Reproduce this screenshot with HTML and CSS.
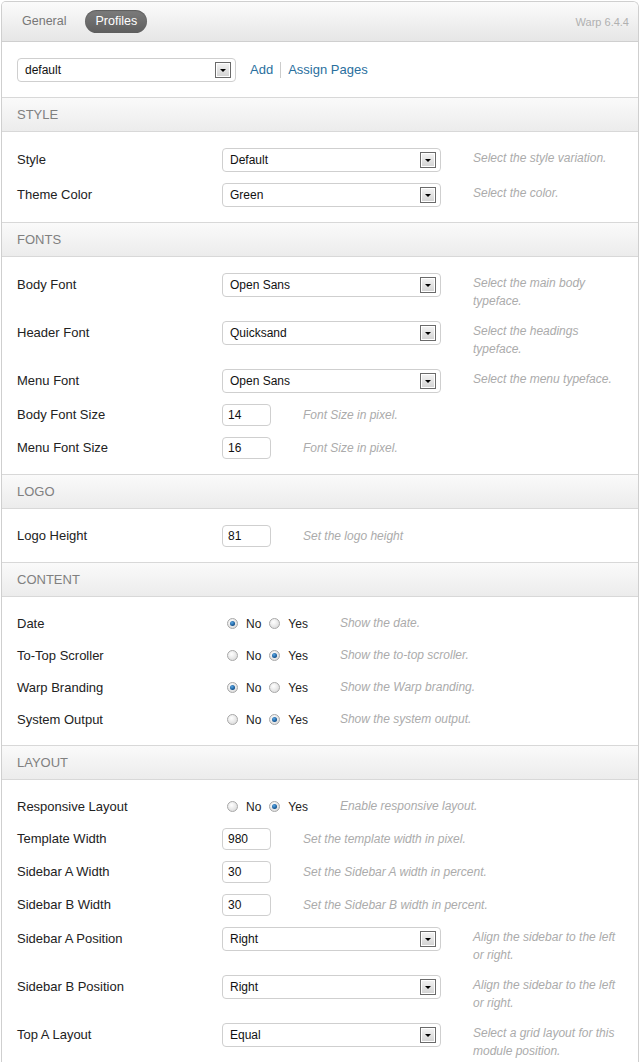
FILE: index.html
```html
<!DOCTYPE html>
<html>
<head>
<meta charset="utf-8">
<link rel="stylesheet" href="styles.css">
</head>
<body>
<div class="panel">
  <div class="topbar">
    <div class="tabs">
      <span class="tab">General</span>
      <span class="tab active">Profiles</span>
    </div>
    <span class="version">Warp 6.4.4</span>
  </div>

  <div class="profile-row">
    <div class="select wide"><span>default</span><i class="arrow"></i></div>
    <a class="link">Add</a>
    <span class="sep"></span>
    <a class="link">Assign Pages</a>
  </div>

  <div class="heading">STYLE</div>
  <div class="section">
    <div class="row"><label>Style</label><div class="select"><span>Default</span><i class="arrow"></i></div><p class="desc">Select the style variation.</p></div>
    <div class="row"><label>Theme Color</label><div class="select"><span>Green</span><i class="arrow"></i></div><p class="desc">Select the color.</p></div>
  </div>

  <div class="heading">FONTS</div>
  <div class="section">
    <div class="row"><label>Body Font</label><div class="select"><span>Open Sans</span><i class="arrow"></i></div><p class="desc">Select the main body typeface.</p></div>
    <div class="row"><label>Header Font</label><div class="select"><span>Quicksand</span><i class="arrow"></i></div><p class="desc">Select the headings typeface.</p></div>
    <div class="row"><label>Menu Font</label><div class="select"><span>Open Sans</span><i class="arrow"></i></div><p class="desc">Select the menu typeface.</p></div>
    <div class="row small"><label>Body Font Size</label><div class="input">14</div><p class="desc">Font Size in pixel.</p></div>
    <div class="row small"><label>Menu Font Size</label><div class="input">16</div><p class="desc">Font Size in pixel.</p></div>
  </div>

  <div class="heading">LOGO</div>
  <div class="section">
    <div class="row small"><label>Logo Height</label><div class="input">81</div><p class="desc">Set the logo height</p></div>
  </div>

  <div class="heading">CONTENT</div>
  <div class="section">
    <div class="row radio-row"><label>Date</label><div class="radios"><i class="radio on"></i><span>No</span><i class="radio"></i><span>Yes</span></div><p class="desc">Show the date.</p></div>
    <div class="row radio-row"><label>To-Top Scroller</label><div class="radios"><i class="radio"></i><span>No</span><i class="radio on"></i><span>Yes</span></div><p class="desc">Show the to-top scroller.</p></div>
    <div class="row radio-row"><label>Warp Branding</label><div class="radios"><i class="radio on"></i><span>No</span><i class="radio"></i><span>Yes</span></div><p class="desc">Show the Warp branding.</p></div>
    <div class="row radio-row"><label>System Output</label><div class="radios"><i class="radio"></i><span>No</span><i class="radio on"></i><span>Yes</span></div><p class="desc">Show the system output.</p></div>
  </div>

  <div class="heading">LAYOUT</div>
  <div class="section">
    <div class="row radio-row"><label>Responsive Layout</label><div class="radios"><i class="radio"></i><span>No</span><i class="radio on"></i><span>Yes</span></div><p class="desc">Enable responsive layout.</p></div>
    <div class="row small"><label>Template Width</label><div class="input">980</div><p class="desc">Set the template width in pixel.</p></div>
    <div class="row small"><label>Sidebar A Width</label><div class="input">30</div><p class="desc">Set the Sidebar A width in percent.</p></div>
    <div class="row small"><label>Sidebar B Width</label><div class="input">30</div><p class="desc">Set the Sidebar B width in percent.</p></div>
    <div class="row"><label>Sidebar A Position</label><div class="select"><span>Right</span><i class="arrow"></i></div><p class="desc">Align the sidebar to the left or right.</p></div>
    <div class="row"><label>Sidebar B Position</label><div class="select"><span>Right</span><i class="arrow"></i></div><p class="desc">Align the sidebar to the left or right.</p></div>
    <div class="row"><label>Top A Layout</label><div class="select"><span>Equal</span><i class="arrow"></i></div><p class="desc">Select a grid layout for this module position.</p></div>
  </div>
</div>
</body>
</html>
```

FILE: styles.css
```css
* { box-sizing: border-box; }
html, body { margin: 0; padding: 0; background: #fff; }
body { font-family: "Liberation Sans", Arial, sans-serif; color: #222; }

.panel {
  margin: 1px 0 0 1px;
  width: 638px;
  border: 1px solid #cfcfcf;
  border-bottom: none;
  border-radius: 5px 6px 0 0;
  overflow: hidden;
}

.topbar {
  height: 40px;
  display: flex;
  align-items: center;
  justify-content: space-between;
  padding: 0 9px 0 10px;
  background: linear-gradient(#fbfbfb, #e6e6e6);
  border-bottom: 1px solid #cfcfcf;
}
.tabs { display: flex; align-items: center; gap: 9px; }
.tab {
  font-size: 12.5px;
  color: #777;
  padding: 0 10px;
  height: 23px;
  line-height: 23px;
  border-radius: 12px;
}
.tab.active {
  color: #fff;
  background: linear-gradient(#7c7c7c, #5e5e5e);
  box-shadow: inset 0 1px 1px rgba(0,0,0,0.25);
}
.version { font-size: 11px; color: #b0b0b0; }

.profile-row {
  height: 56px;
  display: flex;
  align-items: center;
  padding: 0 15px;
  border-bottom: 1px solid #d8d8d8;
}
.link { color: #2a6f9e; font-size: 13px; text-decoration: none; }
.profile-row .select { margin-right: 14px; }
.sep { width: 1px; height: 16px; background: #ccc; margin: 0 7px; }

.heading {
  height: 34px;
  line-height: 33px;
  padding-left: 15px;
  font-size: 13px;
  color: #808080;
  background: linear-gradient(#fafafa, #ececec);
  border-bottom: 1px solid #d8d8d8;
}
.section {
  padding: 16px 15px 15px 15px;
  display: flex;
  flex-direction: column;
  gap: 11px;
  border-bottom: 1px solid #d8d8d8;
}

.row { display: flex; align-items: flex-start; }
.row label {
  width: 205px;
  flex: none;
  font-size: 13px;
  line-height: 24px;
  color: #222;
}
.row.small label { line-height: 22px; }
.row.radio-row label { line-height: 21px; }

.select {
  flex: none;
  width: 219px;
  height: 24px;
  border: 1px solid #cfcfcf;
  border-radius: 4px;
  display: flex;
  align-items: center;
  justify-content: space-between;
  padding: 0 4px 0 7px;
  font-size: 12px;
  color: #111;
  background: #fff;
}
.arrow {
  width: 16px;
  height: 16px;
  border: 1px solid #6a6a6a;
  background: linear-gradient(#f4f4f4, #d2d2d2);
  box-shadow: inset 0 0 0 1px #fff;
  position: relative;
}
.arrow::after {
  content: "";
  position: absolute;
  left: 4px;
  top: 6px;
  border-left: 3px solid transparent;
  border-right: 3px solid transparent;
  border-top: 3px solid #000;
}

.input {
  flex: none;
  width: 49px;
  height: 22px;
  border: 1px solid #cfcfcf;
  border-radius: 4px;
  padding: 0 5px;
  line-height: 20px;
  font-size: 12px;
  color: #111;
}

.radios {
  flex: none;
  display: flex;
  align-items: center;
  height: 21px;
  padding-left: 5px;
  font-size: 12px;
  color: #222;
}
.radios span { margin: 0 8px 0 8px; }
.radios span:last-child { margin-right: 0; }
.radio {
  width: 11px;
  height: 11px;
  border-radius: 50%;
  border: 1px solid #a8a8a8;
  background: radial-gradient(circle at 40% 35%, #ffffff, #dcdcdc 80%);
  position: relative;
}
.radio.on::after {
  content: "";
  position: absolute;
  left: 2px;
  top: 2px;
  width: 5px;
  height: 5px;
  border-radius: 50%;
  background: radial-gradient(circle at 40% 35%, #5aa8e6, #0f4f8c 70%);
}

.desc {
  margin: 0 0 0 32px;
  flex: 1;
  font-size: 12px;
  font-style: italic;
  color: #ababab;
  line-height: 18px;
  padding-top: 1px;
}
.row.small .desc { padding-top: 2px; }
.row.radio-row .desc { padding-top: 1px; }
```
